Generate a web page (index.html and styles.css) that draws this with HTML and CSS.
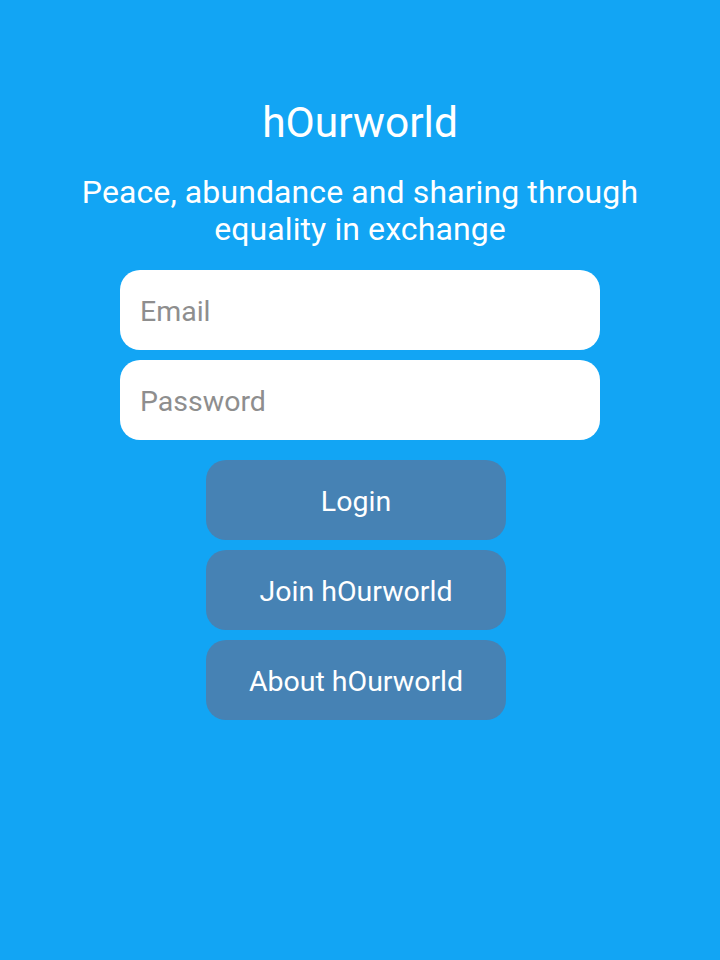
FILE: index.html
```html
<!DOCTYPE html>
<html lang="en">
<head>
<meta charset="utf-8">
<title>hOurworld</title>
<link rel="stylesheet" href="styles.css">
</head>
<body>
<main class="page">
  <h1 class="title">hOurworld</h1>
  <p class="tagline">Peace, abundance and sharing through<br>equality in exchange</p>
  <form class="form">
    <input class="field" type="email" placeholder="Email">
    <input class="field" type="password" placeholder="Password">
    <div class="actions">
      <button type="button" class="btn">Login</button>
      <button type="button" class="btn">Join hOurworld</button>
      <button type="button" class="btn">About hOurworld</button>
    </div>
  </form>
</main>
</body>
</html>
```
FILE: styles.css
```css
html, body {
  margin: 0;
  padding: 0;
  height: 100%;
}
body {
  background: #12a5f4;
  font-family: Roboto, "Liberation Sans", sans-serif;
  color: #ffffff;
}
.page {
  display: flex;
  flex-direction: column;
  align-items: center;
  padding-top: 98px;
}
.title {
  margin: 0;
  font-size: 42.5px;
  line-height: 50px;
  font-weight: 400;
}
.tagline {
  margin: 26px 0 0;
  font-size: 32px;
  line-height: 37px;
  text-align: center;
  letter-spacing: 0.1px;
}
.form {
  margin-top: 22px;
  display: flex;
  flex-direction: column;
  align-items: center;
  gap: 10px;
}
.field {
  box-sizing: border-box;
  width: 480px;
  height: 80px;
  border: none;
  border-radius: 20px;
  background: #ffffff;
  padding: 2px 20px 0;
  font-family: Roboto, "Liberation Sans", sans-serif;
  font-size: 28.5px;
  color: #333333;
  outline: none;
}
.field::placeholder {
  color: #8e8e8e;
}
.actions {
  margin-top: 10px;
  display: flex;
  flex-direction: column;
  gap: 10px;
  margin-right: 8px;
}
.btn {
  width: 300px;
  height: 80px;
  border: none;
  border-radius: 20px;
  background: #4682b4;
  color: #ffffff;
  font-family: Roboto, "Liberation Sans", sans-serif;
  font-size: 28.5px;
  padding: 2px 0 0;
}
```
